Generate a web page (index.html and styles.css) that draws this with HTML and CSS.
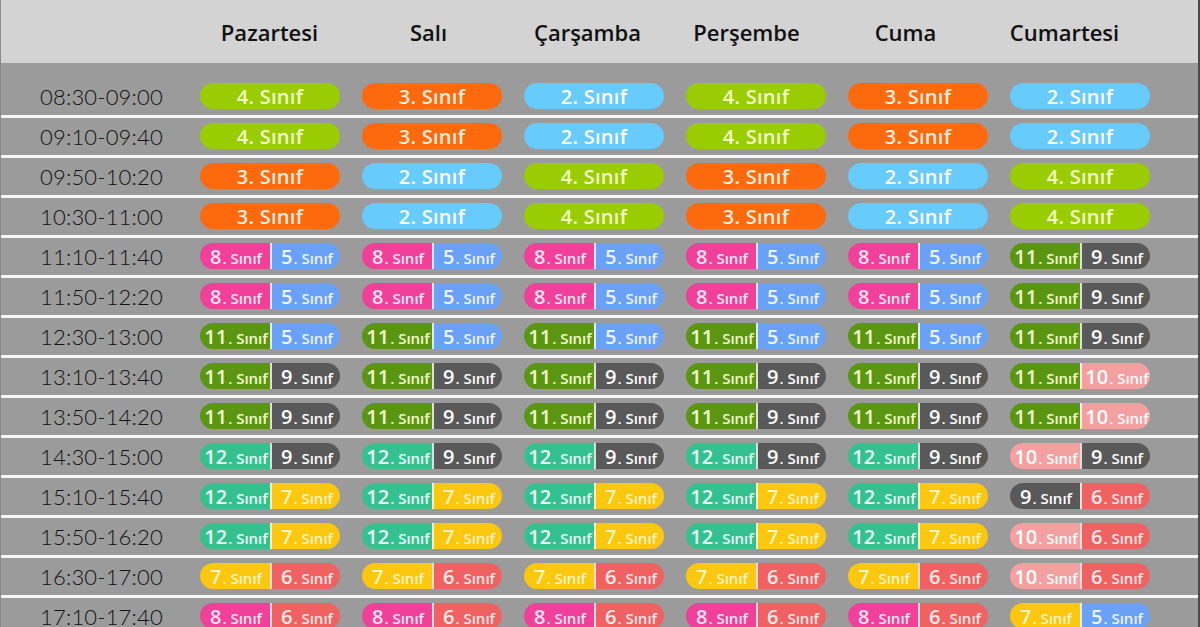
FILE: index.html
```html
<!DOCTYPE html>
<html lang="tr">
<head>
<meta charset="utf-8">
<title>Ders Programı</title>
<link rel="stylesheet" href="styles.css">
</head>
<body>
<div class="page">
  <div class="head">
    <div class="corner"></div>
    <div class="day">Pazartesi</div>
    <div class="day">Salı</div>
    <div class="day">Çarşamba</div>
    <div class="day">Perşembe</div>
    <div class="day">Cuma</div>
    <div class="day">Cumartesi</div>
  </div>
  <div class="table">
    <div class="row first">
      <div class="time">08:30-09:00</div>
      <div class="pill g4">4. Sınıf</div><div class="pill g3">3. Sınıf</div><div class="pill g2">2. Sınıf</div><div class="pill g4">4. Sınıf</div><div class="pill g3">3. Sınıf</div><div class="pill g2">2. Sınıf</div>
    </div>
    <div class="row">
      <div class="time">09:10-09:40</div>
      <div class="pill g4">4. Sınıf</div><div class="pill g3">3. Sınıf</div><div class="pill g2">2. Sınıf</div><div class="pill g4">4. Sınıf</div><div class="pill g3">3. Sınıf</div><div class="pill g2">2. Sınıf</div>
    </div>
    <div class="row">
      <div class="time">09:50-10:20</div>
      <div class="pill g3">3. Sınıf</div><div class="pill g2">2. Sınıf</div><div class="pill g4">4. Sınıf</div><div class="pill g3">3. Sınıf</div><div class="pill g2">2. Sınıf</div><div class="pill g4">4. Sınıf</div>
    </div>
    <div class="row">
      <div class="time">10:30-11:00</div>
      <div class="pill g3">3. Sınıf</div><div class="pill g2">2. Sınıf</div><div class="pill g4">4. Sınıf</div><div class="pill g3">3. Sınıf</div><div class="pill g2">2. Sınıf</div><div class="pill g4">4. Sınıf</div>
    </div>
    <div class="row">
      <div class="time">11:10-11:40</div>
      <div class="split"><span class="half g8"><b>8</b>. Sınıf</span><span class="half g5"><b>5</b>. Sınıf</span></div>
      <div class="split"><span class="half g8"><b>8</b>. Sınıf</span><span class="half g5"><b>5</b>. Sınıf</span></div>
      <div class="split"><span class="half g8"><b>8</b>. Sınıf</span><span class="half g5"><b>5</b>. Sınıf</span></div>
      <div class="split"><span class="half g8"><b>8</b>. Sınıf</span><span class="half g5"><b>5</b>. Sınıf</span></div>
      <div class="split"><span class="half g8"><b>8</b>. Sınıf</span><span class="half g5"><b>5</b>. Sınıf</span></div>
      <div class="split"><span class="half g11"><b>11</b>. Sınıf</span><span class="half g9"><b>9</b>. Sınıf</span></div>
    </div>
    <div class="row">
      <div class="time">11:50-12:20</div>
      <div class="split"><span class="half g8"><b>8</b>. Sınıf</span><span class="half g5"><b>5</b>. Sınıf</span></div>
      <div class="split"><span class="half g8"><b>8</b>. Sınıf</span><span class="half g5"><b>5</b>. Sınıf</span></div>
      <div class="split"><span class="half g8"><b>8</b>. Sınıf</span><span class="half g5"><b>5</b>. Sınıf</span></div>
      <div class="split"><span class="half g8"><b>8</b>. Sınıf</span><span class="half g5"><b>5</b>. Sınıf</span></div>
      <div class="split"><span class="half g8"><b>8</b>. Sınıf</span><span class="half g5"><b>5</b>. Sınıf</span></div>
      <div class="split"><span class="half g11"><b>11</b>. Sınıf</span><span class="half g9"><b>9</b>. Sınıf</span></div>
    </div>
    <div class="row">
      <div class="time">12:30-13:00</div>
      <div class="split"><span class="half g11"><b>11</b>. Sınıf</span><span class="half g5"><b>5</b>. Sınıf</span></div>
      <div class="split"><span class="half g11"><b>11</b>. Sınıf</span><span class="half g5"><b>5</b>. Sınıf</span></div>
      <div class="split"><span class="half g11"><b>11</b>. Sınıf</span><span class="half g5"><b>5</b>. Sınıf</span></div>
      <div class="split"><span class="half g11"><b>11</b>. Sınıf</span><span class="half g5"><b>5</b>. Sınıf</span></div>
      <div class="split"><span class="half g11"><b>11</b>. Sınıf</span><span class="half g5"><b>5</b>. Sınıf</span></div>
      <div class="split"><span class="half g11"><b>11</b>. Sınıf</span><span class="half g9"><b>9</b>. Sınıf</span></div>
    </div>
    <div class="row">
      <div class="time">13:10-13:40</div>
      <div class="split"><span class="half g11"><b>11</b>. Sınıf</span><span class="half g9"><b>9</b>. Sınıf</span></div>
      <div class="split"><span class="half g11"><b>11</b>. Sınıf</span><span class="half g9"><b>9</b>. Sınıf</span></div>
      <div class="split"><span class="half g11"><b>11</b>. Sınıf</span><span class="half g9"><b>9</b>. Sınıf</span></div>
      <div class="split"><span class="half g11"><b>11</b>. Sınıf</span><span class="half g9"><b>9</b>. Sınıf</span></div>
      <div class="split"><span class="half g11"><b>11</b>. Sınıf</span><span class="half g9"><b>9</b>. Sınıf</span></div>
      <div class="split"><span class="half g11"><b>11</b>. Sınıf</span><span class="half g10"><b>10</b>. Sınıf</span></div>
    </div>
    <div class="row">
      <div class="time">13:50-14:20</div>
      <div class="split"><span class="half g11"><b>11</b>. Sınıf</span><span class="half g9"><b>9</b>. Sınıf</span></div>
      <div class="split"><span class="half g11"><b>11</b>. Sınıf</span><span class="half g9"><b>9</b>. Sınıf</span></div>
      <div class="split"><span class="half g11"><b>11</b>. Sınıf</span><span class="half g9"><b>9</b>. Sınıf</span></div>
      <div class="split"><span class="half g11"><b>11</b>. Sınıf</span><span class="half g9"><b>9</b>. Sınıf</span></div>
      <div class="split"><span class="half g11"><b>11</b>. Sınıf</span><span class="half g9"><b>9</b>. Sınıf</span></div>
      <div class="split"><span class="half g11"><b>11</b>. Sınıf</span><span class="half g10"><b>10</b>. Sınıf</span></div>
    </div>
    <div class="row">
      <div class="time">14:30-15:00</div>
      <div class="split"><span class="half g12"><b>12</b>. Sınıf</span><span class="half g9"><b>9</b>. Sınıf</span></div>
      <div class="split"><span class="half g12"><b>12</b>. Sınıf</span><span class="half g9"><b>9</b>. Sınıf</span></div>
      <div class="split"><span class="half g12"><b>12</b>. Sınıf</span><span class="half g9"><b>9</b>. Sınıf</span></div>
      <div class="split"><span class="half g12"><b>12</b>. Sınıf</span><span class="half g9"><b>9</b>. Sınıf</span></div>
      <div class="split"><span class="half g12"><b>12</b>. Sınıf</span><span class="half g9"><b>9</b>. Sınıf</span></div>
      <div class="split"><span class="half g10"><b>10</b>. Sınıf</span><span class="half g9"><b>9</b>. Sınıf</span></div>
    </div>
    <div class="row">
      <div class="time">15:10-15:40</div>
      <div class="split"><span class="half g12"><b>12</b>. Sınıf</span><span class="half g7"><b>7</b>. Sınıf</span></div>
      <div class="split"><span class="half g12"><b>12</b>. Sınıf</span><span class="half g7"><b>7</b>. Sınıf</span></div>
      <div class="split"><span class="half g12"><b>12</b>. Sınıf</span><span class="half g7"><b>7</b>. Sınıf</span></div>
      <div class="split"><span class="half g12"><b>12</b>. Sınıf</span><span class="half g7"><b>7</b>. Sınıf</span></div>
      <div class="split"><span class="half g12"><b>12</b>. Sınıf</span><span class="half g7"><b>7</b>. Sınıf</span></div>
      <div class="split"><span class="half g9"><b>9</b>. Sınıf</span><span class="half g6"><b>6</b>. Sınıf</span></div>
    </div>
    <div class="row">
      <div class="time">15:50-16:20</div>
      <div class="split"><span class="half g12"><b>12</b>. Sınıf</span><span class="half g7"><b>7</b>. Sınıf</span></div>
      <div class="split"><span class="half g12"><b>12</b>. Sınıf</span><span class="half g7"><b>7</b>. Sınıf</span></div>
      <div class="split"><span class="half g12"><b>12</b>. Sınıf</span><span class="half g7"><b>7</b>. Sınıf</span></div>
      <div class="split"><span class="half g12"><b>12</b>. Sınıf</span><span class="half g7"><b>7</b>. Sınıf</span></div>
      <div class="split"><span class="half g12"><b>12</b>. Sınıf</span><span class="half g7"><b>7</b>. Sınıf</span></div>
      <div class="split"><span class="half g10"><b>10</b>. Sınıf</span><span class="half g6"><b>6</b>. Sınıf</span></div>
    </div>
    <div class="row">
      <div class="time">16:30-17:00</div>
      <div class="split"><span class="half g7"><b>7</b>. Sınıf</span><span class="half g6"><b>6</b>. Sınıf</span></div>
      <div class="split"><span class="half g7"><b>7</b>. Sınıf</span><span class="half g6"><b>6</b>. Sınıf</span></div>
      <div class="split"><span class="half g7"><b>7</b>. Sınıf</span><span class="half g6"><b>6</b>. Sınıf</span></div>
      <div class="split"><span class="half g7"><b>7</b>. Sınıf</span><span class="half g6"><b>6</b>. Sınıf</span></div>
      <div class="split"><span class="half g7"><b>7</b>. Sınıf</span><span class="half g6"><b>6</b>. Sınıf</span></div>
      <div class="split"><span class="half g10"><b>10</b>. Sınıf</span><span class="half g6"><b>6</b>. Sınıf</span></div>
    </div>
    <div class="row">
      <div class="time">17:10-17:40</div>
      <div class="split"><span class="half g8"><b>8</b>. Sınıf</span><span class="half g6"><b>6</b>. Sınıf</span></div>
      <div class="split"><span class="half g8"><b>8</b>. Sınıf</span><span class="half g6"><b>6</b>. Sınıf</span></div>
      <div class="split"><span class="half g8"><b>8</b>. Sınıf</span><span class="half g6"><b>6</b>. Sınıf</span></div>
      <div class="split"><span class="half g8"><b>8</b>. Sınıf</span><span class="half g6"><b>6</b>. Sınıf</span></div>
      <div class="split"><span class="half g8"><b>8</b>. Sınıf</span><span class="half g6"><b>6</b>. Sınıf</span></div>
      <div class="split"><span class="half g7"><b>7</b>. Sınıf</span><span class="half g5"><b>5</b>. Sınıf</span></div>
    </div>
  </div>
</div>
</body>
</html>
```

FILE: styles.css
```css
* { box-sizing: border-box; }
html, body {
  margin: 0;
  padding: 0;
  width: 1200px;
  height: 627px;
  overflow: hidden;
  background: #9b9b9b;
}
.page {
  width: 1200px;
  height: 627px;
  overflow: hidden;
  border-right: 2px solid #4a4a4a;
  border-left: 1px solid #8a8a8a;
  font-family: "Open Sans", "Noto Sans", sans-serif;
}
.head {
  height: 63px;
  background: #d3d3d3;
  display: grid;
  grid-template-columns: 189px repeat(6, 159px);
  align-items: center;
}
.day {
  text-align: center;
  font-size: 22px;
  font-weight: 600;
  color: #111;
  padding-top: 1px;
}
.table {
  background: #9b9b9b;
  padding-top: 15px;
}
.row {
  display: grid;
  grid-template-columns: 138px repeat(6, 140px);
  column-gap: 22px;
  padding-left: 39px;
  height: 40px;
  padding-top: 1px;
  padding-bottom: 2px;
  border-bottom: 3px solid #f6f6f6;
  align-items: center;
}
.time {
  font-family: "Lato", "Open Sans", sans-serif;
  font-size: 22px;
  font-weight: 300;
  color: #111;
  letter-spacing: 0.2px;
  white-space: nowrap;
}
.pill {
  height: 26px;
  border-radius: 13px;
  text-align: center;
  font-size: 20px;
  font-weight: 600;
  letter-spacing: 0.3px;
  line-height: 27px;
}
.split {
  height: 26px;
  border-radius: 13px;
  overflow: hidden;
  display: grid;
  grid-template-columns: 70px 70px;
}
.half {
  display: flex;
  align-items: baseline;
  justify-content: center;
  font-size: 15px;
  font-weight: 600;
  line-height: 27px;
  white-space: nowrap;
  padding-left: 2px;
}
.half b {
  font-size: 20px;
  font-weight: 600;
  margin-right: 1px;
}
.half + .half {
  border-left: 2px solid rgba(255, 255, 255, 0.8);
}
.g2 { background: #67cbfb; color: #ffffff; }
.g3 { background: #fd6a0e; color: #ffeedd; }
.g4 { background: #99cc03; color: #f4ffc6; }
.g5 { background: #69a1f6; color: #eef4ff; }
.g6 { background: #f06262; color: #ffeaea; }
.g7 { background: #fbc70f; color: #fff5c6; }
.g8 { background: #f0409a; color: #ffe6f2; }
.g9 { background: #595959; color: #ffffff; }
.g10 { background: #f5a0a0; color: #ffffff; }
.g11 { background: #5b9612; color: #f3ffcc; }
.g12 { background: #35c18f; color: #e8fff5; }
```
